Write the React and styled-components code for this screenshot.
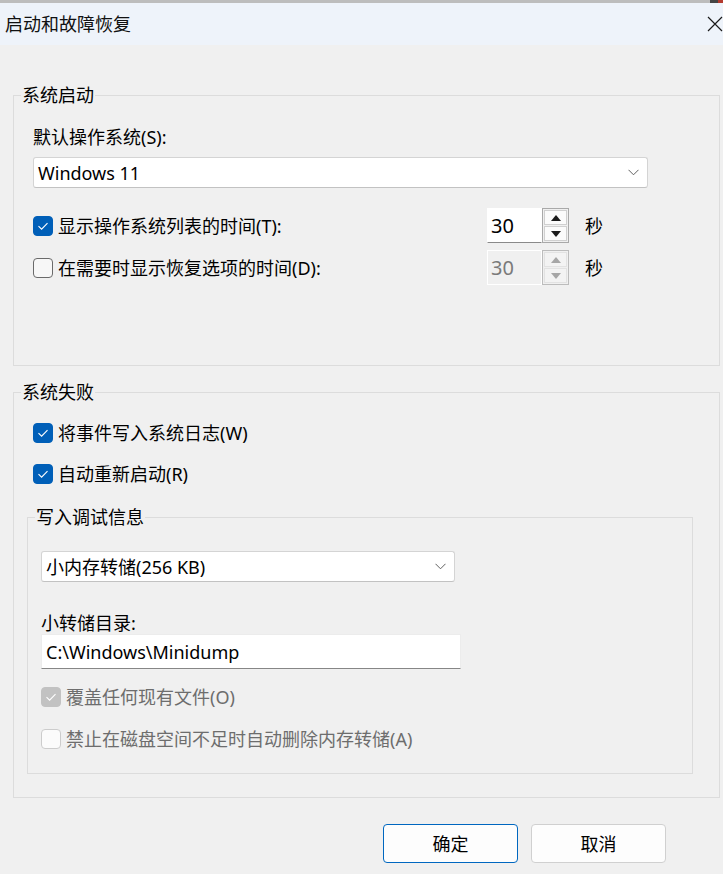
import React from 'react';
import styled, { createGlobalStyle } from 'styled-components';

const GlobalStyle = createGlobalStyle`
  html, body {
    margin: 0;
    padding: 0;
  }
  body {
    width: 723px;
    height: 874px;
    overflow: hidden;
    background: #f0f0f0;
    font-family: "Noto Sans", "Noto Sans CJK SC", sans-serif;
    font-size: 18px;
    line-height: 24px;
    color: #000;
  }
`;

function Check({ checked, disabled }) {
  return (
    <Box $checked={checked} $disabled={disabled}>
      {checked && (
        <svg width="20" height="20" viewBox="0 0 20 20">
          <path d="M5.5 10.2 L8.6 13.2 L14.5 7.2" fill="none" stroke="#fff" strokeWidth="1.1" />
        </svg>
      )}
    </Box>
  );
}

function CheckRow({ checked, disabled, children }) {
  return (
    <CheckLine $disabled={disabled}>
      <Check checked={checked} disabled={disabled} />
      <span>{children}</span>
    </CheckLine>
  );
}

function Chevron() {
  return (
    <svg width="11" height="7" viewBox="0 0 11 7">
      <path d="M0.5 0.8 L5.5 5.8 L10.5 0.8" fill="none" stroke="#606060" strokeWidth="1" />
    </svg>
  );
}

function Combo({ width, children }) {
  return (
    <Select $width={width}>
      <span>{children}</span>
      <Chevron />
    </Select>
  );
}

function Arrow({ up, disabled }) {
  return (
    <svg width="10" height="6" viewBox="0 0 10 6">
      <polygon
        points={up ? '0,6 5,0 10,6' : '0,0 5,6 10,0'}
        fill={disabled ? '#a6a6a6' : '#1a1a1a'}
      />
    </svg>
  );
}

function Spinner({ value, disabled }) {
  return (
    <Spin>
      <SpinInput $disabled={disabled}>{value}</SpinInput>
      <SpinButtons $disabled={disabled}>
        <SpinButton $disabled={disabled}><Arrow up disabled={disabled} /></SpinButton>
        <SpinButton $disabled={disabled}><Arrow disabled={disabled} /></SpinButton>
      </SpinButtons>
    </Spin>
  );
}

function GroupBox({ title, top, pad, inset, children }) {
  return (
    <Group $top={top} $pad={pad}>
      <Legend>{title}</Legend>
      <GroupBody $inset={inset}>{children}</GroupBody>
    </Group>
  );
}

export default function App() {
  return (
    <Window>
      <GlobalStyle />
      <TopEdge />
      <TitleBar>
        <Title>启动和故障恢复</Title>
        <svg width="16" height="16" viewBox="0 0 16 16">
          <path d="M1 1 L15 15 M15 1 L1 15" stroke="#1a1a1a" strokeWidth="1.2" />
        </svg>
      </TitleBar>

      <Body>
        <GroupBox title="系统启动" top={38} pad="18px 19px 80px" inset={19}>
          <FieldLabel>默认操作系统(S):</FieldLabel>
          <Gap $h={8} />
          <Combo width={615}>Windows 11</Combo>
          <Gap $h={20} />
          <SpinRow>
            <CheckRow checked>显示操作系统列表的时间(T):</CheckRow>
            <Spinner value="30" />
            <Unit>秒</Unit>
          </SpinRow>
          <Gap $h={7} />
          <SpinRow>
            <CheckRow>在需要时显示恢复选项的时间(D):</CheckRow>
            <Spinner value="30" disabled />
            <Unit>秒</Unit>
          </SpinRow>
        </GroupBox>

        <GroupBox title="系统失败" top={14} pad="17px 26px 23px" inset={13}>
          <Indent>
            <CheckRow checked>将事件写入系统日志(W)</CheckRow>
            <Gap $h={17} />
            <CheckRow checked>自动重新启动(R)</CheckRow>
          </Indent>

          <GroupBox title="写入调试信息" top={19} pad="22px 13px 22px" inset={13}>
            <Combo width={414}>小内存转储(256 KB)</Combo>
            <Gap $h={30} />
            <DirLabel>小转储目录:</DirLabel>
            <TextInput>C:\Windows\Minidump</TextInput>
            <Gap $h={16} />
            <CheckRow checked disabled>覆盖任何现有文件(O)</CheckRow>
            <Gap $h={18} />
            <CheckRow disabled>禁止在磁盘空间不足时自动删除内存转储(A)</CheckRow>
          </GroupBox>
        </GroupBox>

        <Footer>
          <Button $primary>确定</Button>
          <Button>取消</Button>
        </Footer>
      </Body>
    </Window>
  );
}

const Window = styled.div`
  display: flex;
  flex-direction: column;
  width: 723px;
  height: 874px;
`;

const TopEdge = styled.div`
  height: 3px;
  background: linear-gradient(
    to right,
    #bdbdbd 0,
    #bdbdbd 710px,
    #454545 710px,
    #454545 718px,
    #b33a2e 718px
  );
`;

const TitleBar = styled.div`
  height: 42px;
  display: flex;
  align-items: center;
  justify-content: space-between;
  padding-left: 5px;
  background: #eef3fa;
`;

const Title = styled.div`
  font-size: 18px;
  color: #111;
`;

const Body = styled.div`
  padding: 0 3px 0 13px;
`;

const Group = styled.fieldset`
  margin: ${(p) => p.$top}px 0 0;
  padding: ${(p) => p.$pad};
  padding-left: 0;
  border: 1px solid #dcdcdc;
  min-width: 0;
`;

const Legend = styled.legend`
  margin-left: 7px;
  padding: 0 1px;
  font-size: 18px;
  line-height: 24px;
`;

const GroupBody = styled.div`
  padding-left: ${(p) => p.$inset}px;
`;

const Gap = styled.div`
  height: ${(p) => p.$h}px;
`;

const Indent = styled.div`
  padding-left: 6px;
`;

const FieldLabel = styled.div`
  line-height: 24px;
`;

const DirLabel = styled.div`
  line-height: 22px;
`;

const Select = styled.div`
  box-sizing: border-box;
  width: ${(p) => p.$width}px;
  height: 31px;
  display: flex;
  align-items: center;
  justify-content: space-between;
  padding: 0 8px 0 4px;
  background: #fff;
  border: 1px solid #d4d4d4;
  border-bottom-color: #c2c2c2;
  border-radius: 3px;
`;

const TextInput = styled.div`
  box-sizing: border-box;
  width: 420px;
  height: 35px;
  display: flex;
  align-items: center;
  padding-left: 4px;
  background: #fff;
  border: 1px solid #ececec;
  border-bottom-color: #868686;
`;

const CheckLine = styled.div`
  display: flex;
  align-items: center;
  gap: 5px;
  height: 24px;
  color: ${(p) => (p.$disabled ? '#6d6d6d' : '#000')};
`;

const Box = styled.div`
  box-sizing: border-box;
  width: 20px;
  height: 20px;
  flex: none;
  border-radius: 4px;
  display: flex;
  align-items: center;
  justify-content: center;
  background: ${(p) =>
    p.$checked ? (p.$disabled ? '#c2c2c2' : '#005fb8') : p.$disabled ? '#fbfbfb' : '#f7f7f7'};
  border: 1px solid
    ${(p) =>
      p.$checked ? (p.$disabled ? '#c2c2c2' : '#005fb8') : p.$disabled ? '#cccccc' : '#6a6a6a'};
  svg {
    flex: none;
  }
`;

const SpinRow = styled.div`
  display: grid;
  grid-template-columns: 438px 82px auto;
  column-gap: 16px;
  align-items: center;
  height: 35px;
`;

const Spin = styled.div`
  display: flex;
  height: 35px;
`;

const SpinInput = styled.div`
  box-sizing: border-box;
  width: 55px;
  height: 35px;
  display: flex;
  align-items: center;
  padding-left: 3px;
  font-size: 20px;
  background: ${(p) => (p.$disabled ? '#f0f0f0' : '#fff')};
  color: ${(p) => (p.$disabled ? '#7a7a7a' : '#000')};
  border: 1px solid #ffffff;
  border-bottom-color: ${(p) => (p.$disabled ? '#ffffff' : '#8a8a8a')};
`;

const SpinButtons = styled.div`
  box-sizing: border-box;
  width: 27px;
  height: 35px;
  display: flex;
  flex-direction: column;
  gap: 1px;
  padding: 1px;
  border: 1px solid ${(p) => (p.$disabled ? '#bcbcbc' : '#a9a9a9')};
`;

const SpinButton = styled.div`
  flex: 1;
  display: flex;
  align-items: center;
  justify-content: center;
  background: ${(p) => (p.$disabled ? '#f3f3f3' : '#fbfbfb')};
  border: 1px solid ${(p) => (p.$disabled ? '#e2e2e2' : '#d0d0d0')};
`;

const Unit = styled.span`
  line-height: 24px;
`;

const Footer = styled.div`
  display: flex;
  justify-content: flex-end;
  gap: 13px;
  margin-top: 26px;
  padding-right: 54px;
`;

const Button = styled.div`
  box-sizing: border-box;
  width: 135px;
  height: 39px;
  display: flex;
  align-items: center;
  justify-content: center;
  background: #fdfdfd;
  border: 1px solid ${(p) => (p.$primary ? '#0067c0' : '#d0d0d0')};
  border-radius: 4px;
  font-size: 18px;
`;
